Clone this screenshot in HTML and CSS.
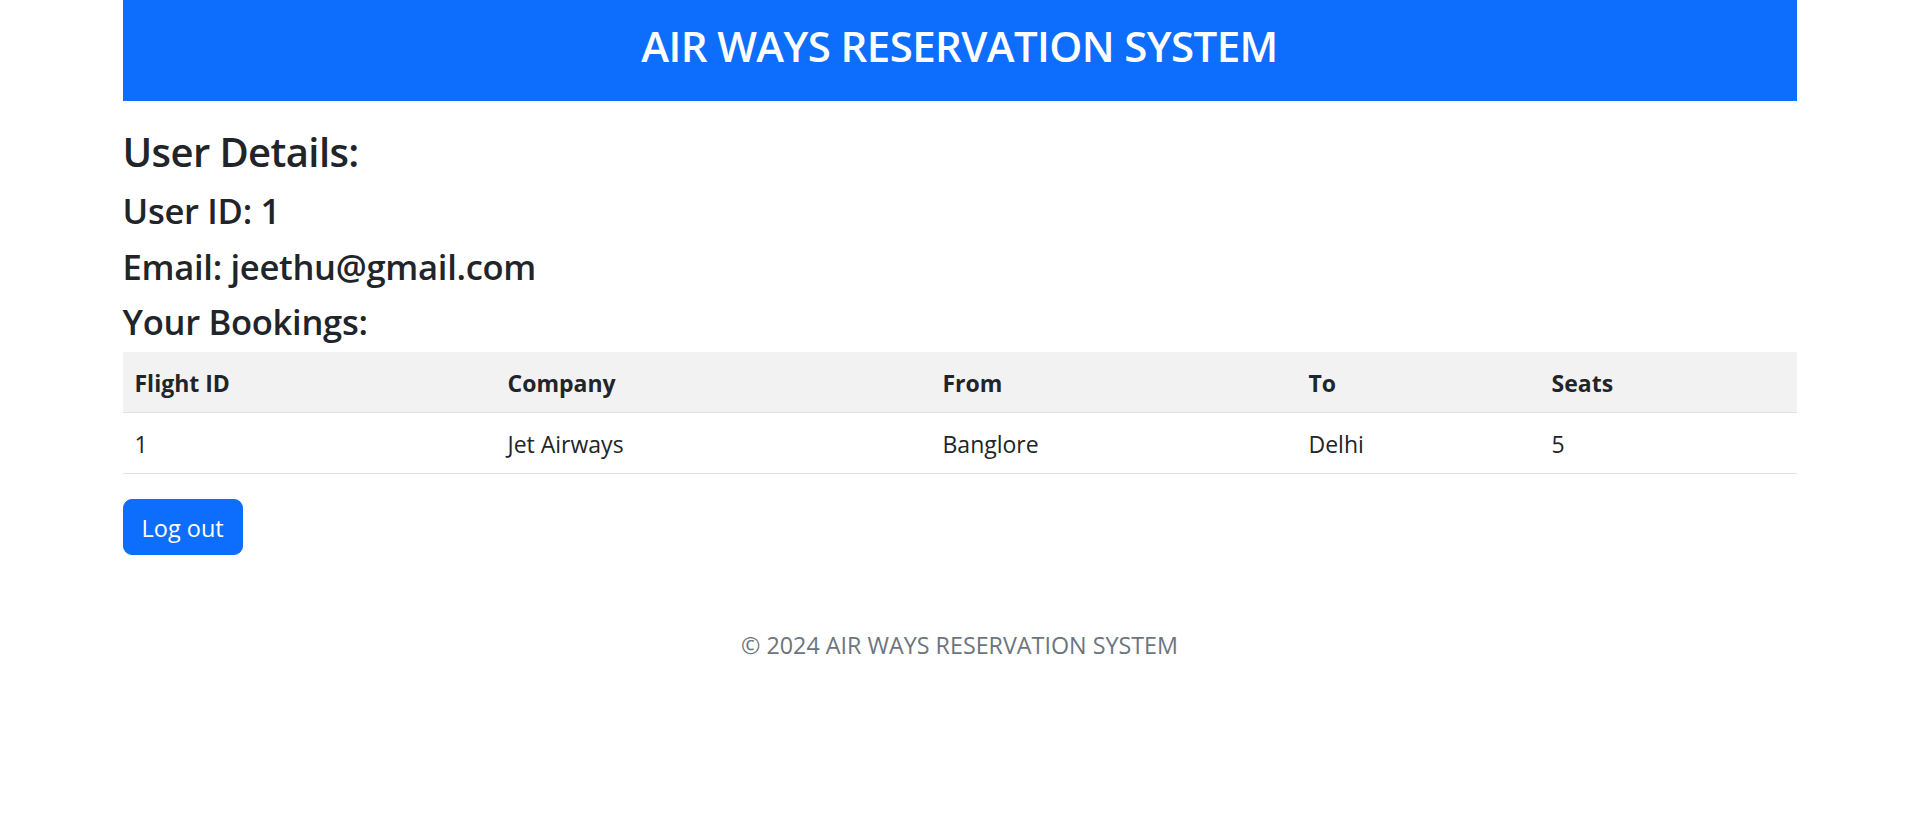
FILE: index.html
```html
<!DOCTYPE html>
<html lang="en">
<head>
<meta charset="utf-8">
<title>Air Ways Reservation System</title>
<link rel="stylesheet" href="styles.css">
</head>
<body>
<div class="page">
  <header class="site-header">
    <h3 class="site-title">AIR WAYS RESERVATION SYSTEM</h3>
  </header>
  <main class="content">
    <h3 class="section-title">User Details:</h3>
    <h4 class="detail">User ID: 1</h4>
    <h4 class="detail">Email: jeethu@gmail.com</h4>
    <h4 class="detail detail-last">Your Bookings:</h4>
    <table class="bookings">
      <thead>
        <tr>
          <th class="col-id">Flight ID</th>
          <th class="col-company">Company</th>
          <th class="col-from">From</th>
          <th class="col-to">To</th>
          <th class="col-seats">Seats</th>
        </tr>
      </thead>
      <tbody>
        <tr>
          <td>1</td>
          <td>Jet Airways</td>
          <td>Banglore</td>
          <td>Delhi</td>
          <td>5</td>
        </tr>
      </tbody>
    </table>
    <button class="btn-logout" type="button">Log out</button>
  </main>
  <footer class="site-footer">© 2024 AIR WAYS RESERVATION SYSTEM</footer>
</div>
</body>
</html>
```

FILE: styles.css
```css
* { box-sizing: border-box; }

html, body {
  margin: 0;
  padding: 0;
  background: #fff;
}

body {
  font-family: "Open Sans", "Noto Sans", sans-serif;
  font-size: 23px;
  line-height: 1.5;
  color: #212529;
}

.page {
  width: 1674px;
  margin: 0 auto;
}

.site-header {
  background: #0d6efd;
  height: 101px;
  display: flex;
  align-items: center;
  justify-content: center;
  padding-bottom: 9px;
}

.site-title {
  margin: 0;
  color: #fff;
  font-size: 42px;
  font-weight: 600;
  line-height: 1.2;
  letter-spacing: -0.6px;
}

.content {
  padding-top: 26px;
}

.section-title {
  margin: 0 0 12px;
  font-size: 40px;
  font-weight: 600;
  line-height: 50.4px;
  letter-spacing: -0.6px;
}

.detail {
  margin: 0 0 12px;
  font-size: 34.6px;
  font-weight: 600;
  line-height: 43.2px;
  letter-spacing: -0.3px;
}

.detail-last {
  margin-bottom: 9px;
}

.bookings {
  width: 100%;
  border-collapse: collapse;
  margin-bottom: 24px;
  font-size: 23px;
}

.bookings th,
.bookings td {
  text-align: left;
  padding: 13px 12px 11px;
  line-height: 36px;
  border-bottom: 1.5px solid #dee2e6;
  vertical-align: top;
}

.bookings thead th {
  background: #f2f2f2;
  font-weight: 700;
}

.col-id { width: 373px; }
.col-company { width: 435px; }
.col-from { width: 366px; }
.col-to { width: 243px; }
.col-seats { width: 257px; }

.btn-logout {
  display: inline-block;
  font-family: inherit;
  font-size: 23.5px;
  line-height: 36px;
  padding: 10px 18px 8px;
  margin-top: 1px;
  color: #fff;
  background: #0d6efd;
  border: 1.5px solid #0d6efd;
  border-radius: 9px;
  cursor: pointer;
}

.site-footer {
  margin-top: 72px;
  padding-bottom: 48px;
  text-align: center;
  color: #6c757d;
  font-size: 23.3px;
  line-height: 36px;
}
```
